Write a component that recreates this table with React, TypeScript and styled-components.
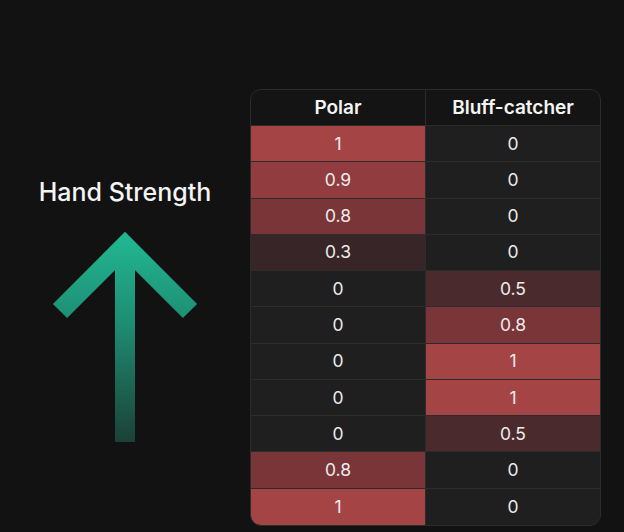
import React from "react";
import styled, { createGlobalStyle } from "styled-components";

const Global = createGlobalStyle`
  html, body { margin: 0; padding: 0; background: #121212; }
  body { font-family: Inter, "Noto Sans", sans-serif; color: #f2f2f2; }
`;

const Page = styled.div`
  width: 624px;
  height: 532px;
  display: flex;
  align-items: flex-start;
  padding-top: 89px;
  box-sizing: border-box;
`;

const Side = styled.div`
  width: 250px;
  height: 436px;
  display: flex;
  flex-direction: column;
  align-items: center;
  justify-content: center;
  gap: 23px;
  padding-top: 6px;
  box-sizing: border-box;
`;

const Title = styled.div`
  font-size: 25px;
  line-height: 29px;
  font-weight: 500;
  color: #f4f4f4;
`;

const Table = styled.div`
  width: 351px;
  height: 437px;
  border: 1px solid #2c2c2c;
  border-radius: 11px;
  overflow: hidden;
  display: grid;
  grid-template-columns: 175px 1fr;
  grid-template-rows: 36px repeat(11, 1fr);
  background: #1e1e1e;
  box-sizing: border-box;
`;

const Head = styled.div<{ $last?: boolean }>`
  min-height: 0;
  box-sizing: border-box;
  display: flex;
  align-items: center;
  justify-content: center;
  background: #141414;
  font-size: 19px;
  font-weight: 600;
  color: #f4f4f4;
  border-right: ${(p) => (p.$last ? "none" : "1px solid #2c2c2c")};
  border-bottom: 1px solid #2c2c2c;
`;

const Cell = styled.div<{ $bg: string; $last?: boolean; $bottom?: boolean }>`
  min-height: 0;
  box-sizing: border-box;
  display: flex;
  align-items: center;
  justify-content: center;
  background: ${(p) => p.$bg};
  font-size: 17.5px;
  line-height: 20px;
  font-weight: 400;
  color: #ececec;
  border-right: ${(p) => (p.$last ? "none" : "1px solid #2c2c2c")};
  border-bottom: ${(p) => (p.$bottom ? "none" : "1px solid #2c2c2c")};
`;

const colors: Record<string, string> = {
  "1": "#a44445",
  "0.9": "#913c3e",
  "0.8": "#793537",
  "0.5": "#4b2a2d",
  "0.3": "#372527",
  "0": "#1f1f1f",
};

const rows: [string, string][] = [
  ["1", "0"],
  ["0.9", "0"],
  ["0.8", "0"],
  ["0.3", "0"],
  ["0", "0.5"],
  ["0", "0.8"],
  ["0", "1"],
  ["0", "1"],
  ["0", "0.5"],
  ["0.8", "0"],
  ["1", "0"],
];

const Arrow = () => (
  <svg width="160" height="212" viewBox="0 0 160 212">
    <defs>
      <linearGradient id="ag" gradientUnits="userSpaceOnUse" x1="0" y1="0" x2="0" y2="212">
        <stop offset="0" stopColor="#22b994" />
        <stop offset="0.45" stopColor="#1e8c71" />
        <stop offset="1" stopColor="#1b4136" />
      </linearGradient>
    </defs>
    <path
      d="M15 81 L80 16 L145 81 M80 20 L80 212"
      fill="none"
      stroke="url(#ag)"
      strokeWidth="20"
      strokeLinejoin="miter"
      strokeLinecap="butt"
    />
  </svg>
);

export default function App() {
  return (
    <>
      <Global />
      <Page>
        <Side>
          <Title>Hand Strength</Title>
          <Arrow />
        </Side>
        <Table>
          <Head>Polar</Head>
          <Head $last>Bluff-catcher</Head>
          {rows.map(([a, b], i) => (
            <React.Fragment key={i}>
              <Cell $bg={colors[a]} $bottom={i === rows.length - 1}>{a}</Cell>
              <Cell $bg={colors[b]} $last $bottom={i === rows.length - 1}>{b}</Cell>
            </React.Fragment>
          ))}
        </Table>
      </Page>
    </>
  );
}
